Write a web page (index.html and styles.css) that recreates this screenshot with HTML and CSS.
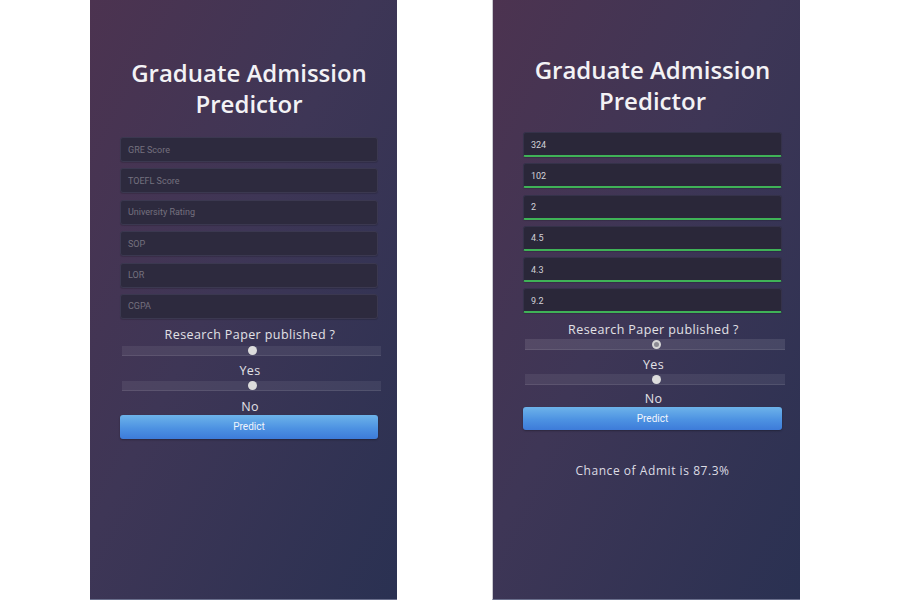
FILE: index.html
```html
<!DOCTYPE html>
<html lang="en">
<head>
<meta charset="utf-8">
<title>Graduate Admission Predictor</title>
<link rel="stylesheet" href="styles.css">
</head>
<body>
<div class="stage">
  <section class="panel">
    <h1 class="title">Graduate Admission<br>Predictor</h1>
    <div class="fields">
      <div class="field placeholder">GRE Score</div>
      <div class="field placeholder">TOEFL Score</div>
      <div class="field placeholder">University Rating</div>
      <div class="field placeholder">SOP</div>
      <div class="field placeholder">LOR</div>
      <div class="field placeholder">CGPA</div>
    </div>
    <div class="label label-q">Research Paper published ?</div>
    <div class="slider"><span class="thumb"></span></div>
    <div class="label label-yes">Yes</div>
    <div class="slider"><span class="thumb"></span></div>
    <div class="label label-no">No</div>
    <button class="btn">Predict</button>
  </section>

  <section class="panel panel-result">
    <h1 class="title">Graduate Admission<br>Predictor</h1>
    <div class="fields">
      <div class="field filled">324</div>
      <div class="field filled">102</div>
      <div class="field filled">2</div>
      <div class="field filled">4.5</div>
      <div class="field filled">4.3</div>
      <div class="field filled">9.2</div>
    </div>
    <div class="label label-q">Research Paper published ?</div>
    <div class="slider slider-active"><span class="thumb thumb-focus"></span></div>
    <div class="label label-yes">Yes</div>
    <div class="slider"><span class="thumb"></span></div>
    <div class="label label-no">No</div>
    <button class="btn">Predict</button>
    <p class="result">Chance of Admit is 87.3%</p>
  </section>
</div>
</body>
</html>
```
FILE: styles.css
```css
* { box-sizing: border-box; }

html, body {
  margin: 0;
  padding: 0;
  background: #ffffff;
}

.stage {
  display: flex;
  gap: 95px;
  padding-left: 90px;
  height: 600px;
}

.panel {
  width: 307px;
  height: 600px;
  padding: 57px 19px 0 30px;
  background: linear-gradient(to bottom right, #4c3350 0%, #3e3656 45%, #2a3152 100%);
  border-bottom: 1px solid #6a6f8c;
  display: flex;
  flex-direction: column;
}

.panel-result {
  width: 308px;
  padding: 54px 18px 0 30px;
  border-left: 1px solid #c9c9cf;
}

.title {
  margin: 0 0 18px;
  font-family: "Open Sans", "DejaVu Sans", sans-serif;
  font-weight: 600;
  font-size: 24px;
  line-height: 31px;
  color: #f3f2f5;
  text-align: center;
}

.panel-result .title { margin-bottom: 16px; }

.fields {
  display: flex;
  flex-direction: column;
  gap: 6.4px;
}

.panel-result .fields { gap: 6.3px; }

.field {
  height: 25px;
  padding: 0 7px;
  display: flex;
  align-items: center;
  font-family: Roboto, "Liberation Sans", sans-serif;
  font-size: 9px;
  background: #2d2a3e;
  border: 1px solid #3b3850;
  border-radius: 3px;
  box-shadow: 0 1px 1px rgba(0, 0, 0, 0.15);
}

.placeholder {
  color: #75717f;
}

.filled {
  color: #d2d1d8;
  background: #2a2739;
  border-color: #35324a;
  border-bottom: 2px solid #3fb257;
  border-radius: 3px 3px 2px 2px;
  padding-top: 1px;
}

.label {
  font-family: "Open Sans", "DejaVu Sans", sans-serif;
  font-size: 12.5px;
  line-height: 16px;
  letter-spacing: 0.4px;
  color: #e2e1e6;
  text-align: center;
  margin-left: 2px;
}

.label-q { margin-top: 8px; }
.label-yes { margin-top: 7px; }
.label-no { margin-top: 8px; }

.slider {
  height: 10px;
  margin: 3px -3px 0 2px;
  background: rgba(255, 255, 255, 0.07);
  border-bottom: 1px solid rgba(255, 255, 255, 0.09);
  display: flex;
  align-items: center;
  justify-content: center;
}

.label-yes + .slider { margin-top: 2px; }

.thumb {
  width: 9px;
  height: 9px;
  border-radius: 50%;
  background: #dcdcdc;
  margin-left: 2px;
}

.thumb-focus {
  background: #8b8a92;
  border: 2.5px solid #d6d6d6;
}

.slider-active {
  background: rgba(255, 255, 255, 0.1);
}

.btn {
  margin: 0;
  height: 24px;
  width: 100%;
  border: 0;
  border-radius: 3px;
  background: linear-gradient(to bottom, #6db3ea 0%, #4d92e2 55%, #3d7bd9 100%);
  box-shadow: 0 1px 2px rgba(0, 0, 0, 0.3);
  color: #f1f4fb;
  font-family: Roboto, "Liberation Sans", sans-serif;
  font-size: 10px;
  padding: 0;
}

/* result panel is a bit tighter */
.panel-result .label-q { margin-top: 9px; }
.panel-result .slider { margin-top: 1px; height: 11px; }
.panel-result .label-yes { margin-top: 7px; }
.panel-result .label-yes + .slider { margin-top: 1px; }
.panel-result .label-no { margin-top: 6px; }
.panel-result .btn { height: 23px; }

.result {
  margin: 33px 0 0;
  font-family: "Open Sans", "DejaVu Sans", sans-serif;
  font-size: 12px;
  line-height: 16px;
  letter-spacing: 0.55px;
  color: #dddce4;
  text-align: center;
}
```
